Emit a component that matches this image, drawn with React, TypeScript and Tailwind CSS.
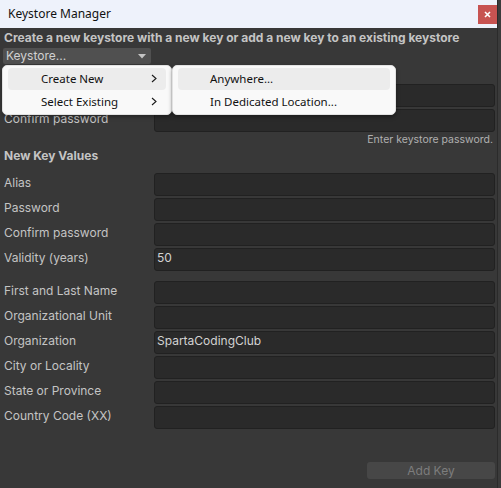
import { ReactNode } from "react";

const ui = { fontFamily: "Inter, 'Noto Sans', sans-serif" };
const win = { fontFamily: "'Noto Sans', 'Open Sans', sans-serif" };

function Field({ value }: { value?: string }) {
  return (
    <div className="flex-1 h-[23px] rounded-[3px] border border-[#212121] bg-[#2a2a2a] px-[2px] text-[12px] leading-[17px] text-[#d2d2d2]">
      {value}
    </div>
  );
}

function Row({ label, value }: { label: string; value?: string }) {
  return (
    <div className="flex h-[23px]">
      <div className="w-[154px] shrink-0 pl-[4px] text-[12px] leading-[19px] text-[#c4c4c4]">{label}</div>
      <Field value={value} />
    </div>
  );
}

function Chevron() {
  return (
    <svg width="6" height="9" viewBox="0 0 6 9" className="shrink-0">
      <polyline points="1,1 5,4.5 1,8" fill="none" stroke="#1a1a1a" strokeWidth="1.1" />
    </svg>
  );
}

function MenuItem({ children, active, chevron, indent }: { children: ReactNode; active?: boolean; chevron?: boolean; indent: string }) {
  return (
    <div className={`flex items-center h-[22px] mx-[5px] rounded-[4px] ${active ? "bg-[#ececec]" : ""}`}>
      <span className={`${indent} flex-1 text-[11.5px] text-[#111]`}>{children}</span>
      {chevron && <span className="pr-[9px] flex items-center"><Chevron /></span>}
    </div>
  );
}

export default function App() {
  return (
    <div className="w-[501px] h-[488px] flex bg-[#3b3b3b] overflow-hidden">
      <div className="relative w-[498px] h-full flex flex-col bg-[#383838] border-r border-[#2b2b2b]" style={ui}>
        {/* title bar */}
        <div className="h-[28px] shrink-0 flex items-center justify-between bg-[#eef2fb]" style={win}>
          <span className="pl-[8px] text-[12px] text-[#111]">Keystore Manager</span>
          <div className="w-[19px] h-[19px] bg-[#c75351] flex items-center justify-center">
            <svg width="7" height="7" viewBox="0 0 7 7">
              <path d="M1 1L6 6M6 1L1 6" stroke="#fff" strokeWidth="1.6" />
            </svg>
          </div>
        </div>

        <div className="flex-1 flex flex-col pr-[2px]">
          <div className="h-[19px] pl-[4px] text-[12px] leading-[19px] font-bold text-[#c4c4c4] whitespace-nowrap">
            Create a new keystore with a new key or add a new key to an existing keystore
          </div>
          <div className="mt-[1px] ml-[3px] w-[148px] h-[16px] rounded-[2px] bg-[#505050] flex items-center justify-between pl-[3px] pr-[5px]">
            <span className="text-[12px] leading-[16px] text-[#d0d0d0]">Keystore...</span>
            <svg width="8" height="5" viewBox="0 0 8 5">
              <polygon points="0,0 8,0 4,4.5" fill="#c4c4c4" />
            </svg>
          </div>

          <div className="mt-[20px] flex flex-col gap-[2px]">
            <Row label="Password" />
            <Row label="Confirm password" />
          </div>
          <div className="h-[16px] text-right pr-[2px] text-[10.5px] leading-[16px] text-[#b0b0b0]">Enter keystore password.</div>
          <div className="h-[16px] pl-[4px] text-[12px] leading-[16px] font-bold text-[#c4c4c4]">New Key Values</div>

          <div className="mt-[9px] flex flex-col gap-[2px]">
            <Row label="Alias" />
            <Row label="Password" />
            <Row label="Confirm password" />
            <Row label="Validity (years)" value="50" />
          </div>

          <div className="mt-[10px] flex flex-col gap-[2px]">
            <Row label="First and Last Name" />
            <Row label="Organizational Unit" />
            <Row label="Organization" value="SpartaCodingClub" />
            <Row label="City or Locality" />
            <Row label="State or Province" />
            <Row label="Country Code (XX)" />
          </div>

          <div className="mt-[33px] flex justify-end">
            <div className="w-[128px] h-[17px] rounded-[3px] bg-[#474747] text-center text-[12px] leading-[17px] text-[#7d7d7d]">
              Add Key
            </div>
          </div>
        </div>

        {/* popup menus */}
        <div className="absolute left-[2px] top-[65px] flex" style={win}>
          <div className="w-[170px] h-[50px] py-[2px] rounded-[5px] bg-[#f9f9f9] border border-[#e2e2e2] shadow-[0_2px_4px_rgba(0,0,0,0.35)] flex flex-col gap-[1px]">
            <MenuItem active chevron indent="pl-[33px]">Create New</MenuItem>
            <MenuItem chevron indent="pl-[33px]">Select Existing</MenuItem>
          </div>
          <div className="w-[224px] h-[50px] py-[2px] rounded-[5px] bg-[#f9f9f9] border border-[#e2e2e2] shadow-[0_2px_4px_rgba(0,0,0,0.35)] flex flex-col gap-[1px]">
            <MenuItem active indent="pl-[32px]">Anywhere...</MenuItem>
            <MenuItem indent="pl-[32px]">In Dedicated Location...</MenuItem>
          </div>
        </div>
      </div>
      <div className="w-[3px] h-full bg-[#3b3b3b]" />
    </div>
  );
}
